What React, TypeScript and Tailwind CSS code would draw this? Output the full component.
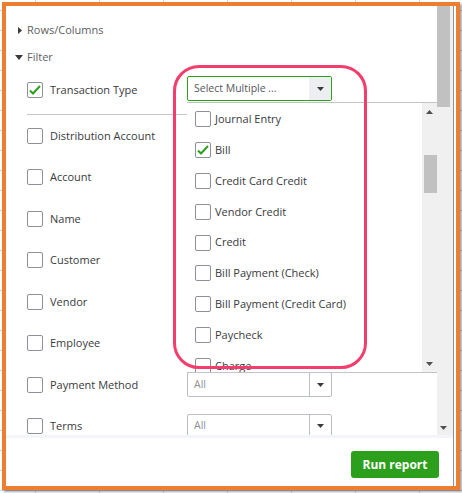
import React from 'react'

const ROWS = [
  'Distribution Account',
  'Account',
  'Name',
  'Customer',
  'Vendor',
  'Employee',
  'Payment Method',
  'Terms',
]

const TYPES = [
  { label: 'Journal Entry', checked: false },
  { label: 'Bill', checked: true },
  { label: 'Credit Card Credit', checked: false },
  { label: 'Vendor Credit', checked: false },
  { label: 'Credit', checked: false },
  { label: 'Bill Payment (Check)', checked: false },
  { label: 'Bill Payment (Credit Card)', checked: false },
  { label: 'Paycheck', checked: false },
  { label: 'Charge', checked: false },
]

export default function App() {
  return (
    <div
      className="relative w-[462px] h-[493px] overflow-hidden bg-white bg-[linear-gradient(to_right,#d2d2d2_1px,transparent_1px),linear-gradient(to_bottom,#d2d2d2_1px,transparent_1px)] bg-size-[64px_20px] bg-position-[35px_10px]"
      style={{ fontFamily: '"Open Sans", "Liberation Sans", sans-serif' }}
    >
      {/* Dialog frame */}
      <div className="absolute left-[2px] top-[2px] w-[458px] h-[488px] border-4 border-[#ed7d31] bg-white shadow-[2px_2px_2px_rgba(0,0,0,0.35)] flex">
        <div className="flex-1 flex flex-col border-r border-[#8f8f8f] mr-[2px]">
          <div className="h-[429px] flex">
            {/* Content */}
            <div className="relative flex-1 overflow-hidden">
              <div className="pt-[10px]">
                <div className="h-[28px] flex items-center pl-[12px] text-[11px] text-[#5d5e63]">
                  <svg width="4" height="7" viewBox="0 0 4 7" className="mr-[5px]">
                    <path d="M0 0L4 3.5L0 7z" fill="#393a3d" />
                  </svg>
                  Rows/Columns
                </div>
                <div className="h-[26px] flex items-center pl-[9px] text-[11px] text-[#5d5e63]">
                  <svg width="8" height="5" viewBox="0 0 8 5" className="mr-[4px]">
                    <path d="M0 0H8L4 5z" fill="#393a3d" />
                  </svg>
                  Filter
                </div>

                <FilterRow label="Transaction Type" checked value="Select Multiple ..." active height="h-[40px]" />
                <div className="mt-[4px] ml-[21px] h-px bg-[#c4c4c4]" />

                {ROWS.map((r) => (
                  <FilterRow key={r} label={r} value="All" height="h-[41.5px]" />
                ))}
              </div>

              {/* Dropdown list */}
              <div className="absolute left-[181px] top-[96px] w-[250px] h-[271px] bg-white border-y border-[#c4c4c4] overflow-hidden">
                <div className="pt-px pl-[8px]">
                  {TYPES.map((t) => (
                    <div key={t.label} className="h-[30.8px] flex items-center gap-[4px] text-[11px] text-[#393a3d]">
                      <Checkbox checked={t.checked} />
                      <span>{t.label}</span>
                    </div>
                  ))}
                </div>
                <div className="absolute right-0 top-0 bottom-0 w-[15px] bg-[#f0f0f0]">
                  <svg width="7" height="4" viewBox="0 0 7 4" className="absolute left-[4px] top-[7px]">
                    <path d="M0 4H7L3.5 0z" fill="#505050" />
                  </svg>
                  <div className="absolute left-[2px] top-[52px] w-[13px] h-[38px] bg-[#c1c1c1]" />
                  <svg width="7" height="4" viewBox="0 0 7 4" className="absolute left-[4px] top-[259px]">
                    <path d="M0 0H7L3.5 4z" fill="#505050" />
                  </svg>
                </div>
              </div>
            </div>

            {/* Page scrollbar */}
            <div className="relative w-[16px] bg-[#f0f0f0]">
              <div className="absolute left-0 top-0 w-[13px] h-[101px] bg-[#c1c1c1]" />
              <svg width="7" height="4" viewBox="0 0 7 4" className="absolute left-[3px] bottom-[5px]">
                <path d="M0 0H7L3.5 4z" fill="#505050" />
              </svg>
            </div>
          </div>

          <div className="h-[3px] bg-[#f4f5f8]" />

          {/* Footer */}
          <div className="flex-1 flex justify-end items-start pt-[13px] pr-[14px]">
            <button className="w-[88px] h-[27px] rounded-[3px] bg-[#2ca01c] text-white text-[12px] font-bold">
              Run report
            </button>
          </div>
        </div>
      </div>

      {/* Annotation highlight */}
      <div className="absolute left-[173px] top-[65px] w-[194px] h-[304px] border-[3px] border-[#f23d6d] rounded-[26px] pointer-events-none" />
    </div>
  )
}

function FilterRow({ label, checked, value, active, height }: {
  label: string; checked?: boolean; value: string; active?: boolean; height: string
}) {
  return (
    <div className={`${height} flex items-center pl-[21px]`}>
      <Checkbox checked={!!checked} />
      <span className="ml-[7px] w-[137px] text-[11px] text-[#393a3d]">{label}</span>
      <Select value={value} active={active} />
    </div>
  )
}

function Checkbox({ checked }: { checked: boolean }) {
  return (
    <div className="w-4 h-4 shrink-0 rounded-[2px] border border-[#8d9096] bg-white flex items-center justify-center">
      {checked && (
        <svg width="14" height="14" viewBox="0 0 14 14">
          <path d="M2 7.5L5 10.5L12 3" fill="none" stroke="#2ca01c" strokeWidth="2" />
        </svg>
      )}
    </div>
  )
}

function Select({ value, active }: { value: string; active?: boolean }) {
  return (
    <div
      className={`flex h-[25px] w-[145px] rounded-[2px] border bg-white ${
        active ? 'border-[#2ca01c] mb-[3px]' : 'border-[#babec5]'
      }`}
    >
      <div className={`flex-1 flex items-center pl-[6px] text-[10.5px] ${active ? 'text-[#55575d]' : 'text-[#8d9096]'}`}>
        {value}
      </div>
      <div className={`w-[22px] flex items-center justify-center ${active ? 'bg-[#eceef1]' : 'border-l border-[#babec5]'}`}>
        <svg width="7" height="4" viewBox="0 0 7 4">
          <path d="M0 0H7L3.5 4z" fill="#393a3d" />
        </svg>
      </div>
    </div>
  )
}
